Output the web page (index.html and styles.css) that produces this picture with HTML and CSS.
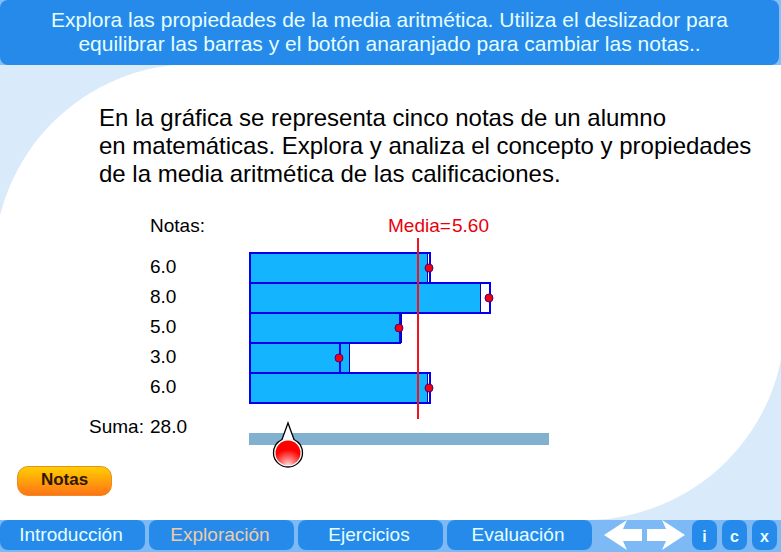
FILE: index.html
```html
<!DOCTYPE html>
<html lang="es">
<head>
<meta charset="utf-8">
<title>Media aritmética</title>
<link rel="stylesheet" href="styles.css">
</head>
<body>
<header class="banner">
  <h1 class="banner-text">Explora las propiedades de la media aritmética. Utiliza el deslizador para<br>equilibrar las barras y el botón anaranjado para cambiar las notas..</h1>
</header>

<main class="stage">
  <p class="intro">En la gráfica se representa cinco notas de un alumno<br>en matemáticas. Explora y analiza el concepto y propiedades<br>de la media aritmética de las calificaciones.</p>

  <section class="activity">
    <table class="grades">
      <thead>
        <tr><td></td><th scope="col">Notas:</th></tr>
      </thead>
      <tbody>
        <tr><td></td><td>6.0</td></tr>
        <tr><td></td><td>8.0</td></tr>
        <tr><td></td><td>5.0</td></tr>
        <tr><td></td><td>3.0</td></tr>
        <tr><td></td><td>6.0</td></tr>
      </tbody>
      <tfoot>
        <tr><th scope="row">Suma:</th><td>28.0</td></tr>
      </tfoot>
    </table>

    <div class="plot">
      <svg class="chart" width="302" height="210" viewBox="0 0 302 210">
        <text class="mean-label" x="139" y="21">Media=</text>
        <text class="mean-label" x="203" y="21">5.60</text>
        <g class="fill">
          <rect x="1" y="42" width="178" height="30"/>
          <rect x="1" y="72" width="231" height="30"/>
          <rect x="1" y="102" width="152" height="30"/>
          <rect x="1" y="132" width="100" height="30"/>
          <rect x="1" y="162" width="178" height="30"/>
        </g>
        <g class="fill-edge">
          <path d="M178.500 42v30M231.500 72v30M152.500 102v30M100.500 132v30M178.500 162v30"/>
        </g>
        <g class="outline">
          <rect x="1" y="42" width="180" height="30"/>
          <rect x="1" y="72" width="240" height="30"/>
          <rect x="1" y="102" width="150" height="30"/>
          <rect x="1" y="132" width="90" height="30"/>
          <rect x="1" y="162" width="180" height="30"/>
        </g>
        <path class="mean-line" d="M169 27V208"/>
        <g class="handle">
          <circle cx="180" cy="57" r="4"/>
          <circle cx="240" cy="87" r="4"/>
          <circle cx="150" cy="117" r="4"/>
          <circle cx="90" cy="147" r="4"/>
          <circle cx="180" cy="177" r="4"/>
        </g>
      </svg>
      <div class="slider">
        <input class="slider-input" type="range" min="0" max="100" value="13" aria-label="Deslizador">
        <svg class="marker" width="32" height="48" viewBox="0 0 32 48">
          <defs>
            <radialGradient id="ball" cx="50%" cy="100%" r="85%">
              <stop offset="0" stop-color="#ffe0e0"/>
              <stop offset="0.350" stop-color="#ff7070"/>
              <stop offset="0.750" stop-color="#ff0000"/>
              <stop offset="1" stop-color="#ff0000"/>
            </radialGradient>
          </defs>
          <path d="M16 2L10 18.500C5 21 1.500 26 1.500 32A14.500 14 0 0 0 30.500 32C30.500 26 27 21 22 18.500Z" fill="#fff" stroke="#000" stroke-width="1.300"/>
          <circle cx="16" cy="32" r="12.500" fill="url(#ball)"/>
        </svg>
      </div>
    </div>
  </section>

  <button class="notes-button" type="button">Notas</button>
</main>

<nav class="bar">
  <div class="tabs">
    <a class="tab" href="#introduccion">Introducción</a>
    <a class="tab tab-active" href="#exploracion">Exploración</a>
    <a class="tab" href="#ejercicios">Ejercicios</a>
    <a class="tab" href="#evaluacion">Evaluación</a>
  </div>
  <div class="arrows">
    <button class="arrow" type="button" aria-label="Anterior">
      <svg width="38" height="30" viewBox="0 0 38 30"><path d="M0 15L23 0L19 9H38V21H19L23 30Z" fill="#fff"/></svg>
    </button>
    <button class="arrow" type="button" aria-label="Siguiente">
      <svg width="38" height="30" viewBox="0 0 38 30"><path d="M38 15L15 0L19 9H0V21H19L15 30Z" fill="#fff"/></svg>
    </button>
  </div>
  <div class="tools">
    <button class="tool" type="button">i</button>
    <button class="tool" type="button">c</button>
    <button class="tool" type="button">x</button>
  </div>
</nav>
</body>
</html>
```
FILE: styles.css
```css
* {
  box-sizing: border-box;
}

body {
  margin: 0;
  min-height: 100vh;
  display: flex;
  flex-direction: column;
  font-family: "Liberation Sans", Arial, sans-serif;
  font-size: 19px;
  color: #000;
  background: #7dbaf5;
}

button {
  font-family: inherit;
  border: 0;
  padding: 0;
  cursor: pointer;
}

.banner {
  padding-right: 2px;
  background: #85bff7;
}

.banner-text {
  margin: 0;
  padding: 8px 0 9px;
  border-radius: 8px;
  background: #268aeb;
  color: #e4ffff;
  font-size: 21px;
  font-weight: 400;
  line-height: 24px;
  text-align: center;
}

.stage {
  position: relative;
  z-index: 0;
  flex: 1;
  overflow: hidden;
  padding: 39px 16px 24px;
  background: #d9eafa;
}

.stage::before {
  content: "";
  position: absolute;
  z-index: -1;
  inset: -1px -4px 0 -6px;
  border-radius: 200px 0;
  background: #fff;
}

.intro {
  margin: 0 0 23px;
  padding-left: 83px;
  font-size: 24px;
  line-height: 28px;
  white-space: nowrap;
}

.activity {
  display: flex;
  padding-left: 73px;
}

.grades {
  width: 160px;
  border-collapse: collapse;
  table-layout: fixed;
  align-self: flex-start;
}

.grades th,
.grades td {
  height: 30px;
  padding: 0;
  font-weight: 400;
  text-align: left;
  line-height: 22px;
}

.grades tr > :first-child {
  width: 61px;
}

.grades thead th {
  height: 41px;
  padding-bottom: 12px;
}

.grades tfoot th,
.grades tfoot td {
  height: 50px;
}

.plot {
  flex: 1;
}

.chart {
  display: block;
}

.mean-label {
  fill: #e8000c;
  font-size: 19px;
}

.fill {
  fill: #14b4ff;
}

.fill-edge {
  fill: none;
  stroke: #0000a8;
  stroke-width: 1;
}

.outline {
  fill: none;
  stroke: #0000ee;
  stroke-width: 2;
}

.mean-line {
  stroke: #f01420;
  stroke-width: 2;
}

.handle {
  fill: #f00010;
  stroke: #500070;
  stroke-width: 1;
}

.slider {
  position: relative;
  width: 300px;
  height: 36px;
}

.slider-input {
  display: block;
  width: 100%;
  height: 36px;
  margin: 0;
  appearance: none;
  background: transparent;
}

.slider-input::-webkit-slider-runnable-track {
  height: 12px;
  background: #82b1cf;
}

.slider-input::-webkit-slider-thumb {
  appearance: none;
  width: 30px;
  height: 12px;
  background: transparent;
}

.marker {
  position: absolute;
  left: 23px;
  top: 0;
  pointer-events: none;
}

.notes-button {
  display: block;
  width: 95px;
  height: 30px;
  margin: 9px 0 0 1px;
  padding-bottom: 3px;
  border: 1px solid #e88d20;
  border-radius: 11px;
  background: linear-gradient(#ffce00, #ff7318);
  color: #301800;
  font-size: 17px;
  font-weight: 700;
}

.bar {
  display: flex;
  align-items: flex-start;
  padding: 0 4px 2px 0;
  background: #7dbaf5;
}

.tabs {
  flex: 1;
  display: grid;
  grid-template-columns: repeat(4, 1fr);
  gap: 4px;
}

.tab {
  height: 30px;
  padding-right: 3px;
  border-radius: 8px;
  background: #268aeb;
  color: #e4ffff;
  line-height: 30px;
  text-align: center;
  text-decoration: none;
}

.tab-active {
  color: #eccca8;
}

.arrows {
  display: flex;
  gap: 5px;
  padding: 0 7px 0 12px;
}

.arrow {
  height: 30px;
  background: none;
}

.arrow svg {
  display: block;
}

.tools {
  display: flex;
  gap: 5px;
}

.tool {
  width: 25px;
  height: 30px;
  padding-top: 3px;
  border-radius: 8px;
  background: #268aeb;
  color: #e4ffff;
  font-size: 16px;
  font-weight: 700;
}
```
